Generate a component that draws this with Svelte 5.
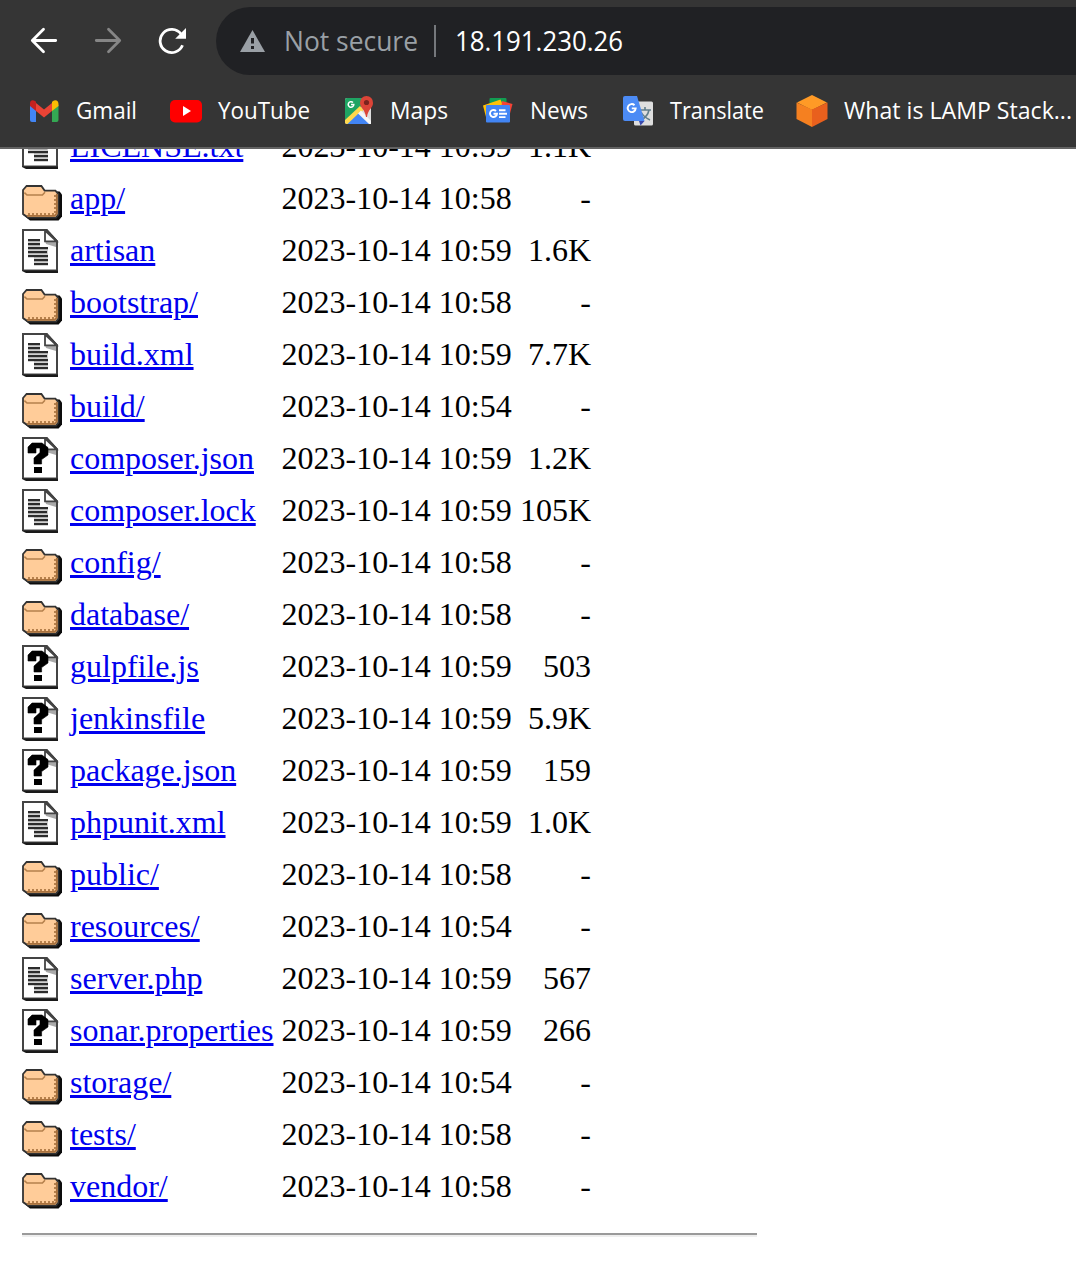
<script lang="ts">
  type Kind = 'text' | 'folder' | 'unknown';
  const rows: [Kind, string, string, string][] = [
    ['text', 'LICENSE.txt', '10:59', '1.1K'],
    ['folder', 'app/', '10:58', '-'],
    ['text', 'artisan', '10:59', '1.6K'],
    ['folder', 'bootstrap/', '10:58', '-'],
    ['text', 'build.xml', '10:59', '7.7K'],
    ['folder', 'build/', '10:54', '-'],
    ['unknown', 'composer.json', '10:59', '1.2K'],
    ['text', 'composer.lock', '10:59', '105K'],
    ['folder', 'config/', '10:58', '-'],
    ['folder', 'database/', '10:58', '-'],
    ['unknown', 'gulpfile.js', '10:59', '503'],
    ['unknown', 'jenkinsfile', '10:59', '5.9K'],
    ['unknown', 'package.json', '10:59', '159'],
    ['text', 'phpunit.xml', '10:59', '1.0K'],
    ['folder', 'public/', '10:58', '-'],
    ['folder', 'resources/', '10:54', '-'],
    ['text', 'server.php', '10:59', '567'],
    ['unknown', 'sonar.properties', '10:59', '266'],
    ['folder', 'storage/', '10:54', '-'],
    ['folder', 'tests/', '10:58', '-'],
    ['folder', 'vendor/', '10:58', '-']
  ];

  // label, full item width, label width
  const bookmarks: [string, number, number][] = [
    ['Gmail', 142, 61],
    ['YouTube', 172, 92],
    ['Maps', 140, 58],
    ['News', 140, 58],
    ['Translate', 174, 94],
    ['What is LAMP Stack...', 280, 228]
  ];
  const textLines = [[5, 3, 6], [7, 3, 6], [9, 3, 10], [11, 3, 9.5], [13, 3, 10], [15, 6, 7], [17, 6, 7]];
</script>

{#snippet label(text, width, size, color)}
  <svg class="label" width={width} height="40" fill={color}>
    <text x="0" y={20 + size * 0.35} font-size={size} textLength={width} lengthAdjust="spacingAndGlyphs">{text}</text>
  </svg>
{/snippet}

{#snippet bookmarkIcon(name)}
  <svg class="mark" viewBox="0 0 32 32">
    {#if name === 'Gmail'}
      <path d="M2 10v15a2 2 0 0 0 2 2h4V14z" fill="#4285f4" />
      <path d="M24 14v13h4.500a2 2 0 0 0 2-2V10z" fill="#34a853" />
      <path d="M8 8l8 6.500L24 8v8l-8 6.500L8 16z" fill="#ea4335" />
      <path d="M2 11V8.500C2 5 5 4.500 7 6l1 .8V16z" fill="#c5221f" />
      <path d="M24 16V7l1-1c3-2 5.500 0 5.500 3v2z" fill="#fbbc04" />
    {:else if name === 'YouTube'}
      <rect x="0" y="5" width="32" height="22.500" rx="5" fill="#f00" />
      <path d="M13 11l8 5-8 5z" fill="#fff" />
    {:else if name === 'Maps'}
      <rect x="3" y="3" width="26" height="26" rx="2" fill="#dcdcdc" />
      <path d="M5 3h18L19 13 3 27V5a2 2 0 0 1 2-2z" fill="#1fa463" />
      <path d="M3 25L18 11l3.500 4L8 29H5a2 2 0 0 1-2-2z" fill="#ffd84c" />
      <path d="M5.500 29L17 18l11 11z" fill="#4285f4" />
      <path d="M16 18.500l3-3L29 26v3h-2z" fill="#f5f5f5" />
      <path d="M24.500 1a6.500 6.500 0 0 0-6.500 7c0 5 5 6 6 14h1c1-8 6-9 6-14a6.500 6.500 0 0 0-6.500-7z" fill="#db4437" />
      <circle cx="24.500" cy="7.500" r="2.600" fill="#7b231e" />
      <path d="M11 7.500a2.800 2.800 0 1 0 .8 2H9" fill="none" stroke="#fff" stroke-width="1.500" />
    {:else if name === 'News'}
      <rect x="7.500" y="3" width="17" height="10" rx="1" fill="#119c52" />
      <path d="M1 10.500L18.500 4.500l5 12L4 22z" fill="#ffc107" />
      <path d="M20 6l10.500 3-4 15-8-2z" fill="#f44336" />
      <rect x="4" y="10" width="24" height="17.500" rx="1" fill="#4285f4" />
      <path d="M14 16a3.500 3.500 0 1 0 1 2.700h-3.500M17 15.300h6.500M17 18.700h8M17 22.100h6.500" fill="none" stroke="#fff" stroke-width="1.900" />
    {:else if name === 'Translate'}
      <rect x="12" y="6.500" width="19" height="24" rx="1.500" fill="#dedede" />
      <path d="M17 26h5.500l-4 4.500z" fill="#3a49ad" />
      <path d="M17 15h12M23 12v3M27 15c-1 5-4 8-8 10M19 17c2 4 5 6 9 8" fill="none" stroke="#607d8b" stroke-width="1.600" />
      <path d="M3 1h12l7.500 25H3a2 2 0 0 1-2-2V3a2 2 0 0 1 2-2z" fill="#4c8bf5" />
      <path d="M12.500 10.200a4 4 0 1 0 1.200 3.200H9.800" fill="none" stroke="#fff" stroke-width="1.900" />
    {:else}
      <path d="M16 0l15 7.500L16 15 1 7.500z" fill="#ff9a26" />
      <path d="M.5 7.500L16 14.500V32L.5 24z" fill="#f58020" />
      <path d="M31.500 7.500L16 14.500V32l15.500-8z" fill="#e9601d" />
    {/if}
  </svg>
{/snippet}

{#snippet fileIcon(kind)}
  <svg class="file" viewBox="0 0 20 22">
    {#if kind === 'folder'}
      <path d="M2 6.500L18.800 7.300l1.200 1.500v11l-1.700 2H4L.6 19z" fill="#0c0c0c" />
      <path d="M.5 6.500L2.300 4.500h7.400L11.300 6.800h5.400l1.500 1.800v10.200l-1.200 1.500H3L.5 18.500z" fill="#fc9" stroke="#333" stroke-width=".9" />
      <path d="M1.200 7.800l1.300 1.200h7.700L11.500 7.600" fill="none" stroke="#b5804c" stroke-width=".8" />
      <path d="M2.500 19.400h13.800l1.100-1.200V8.500" fill="none" stroke="#a9713d" stroke-width=".9" />
      <path d="M3 18.500h13M16.500 9v9" fill="none" stroke="#b5804c" stroke-width="1" stroke-dasharray="1 1" />
    {:else}
      <path d="M0 0h12.500L18 6v16H2l-2-1z" fill="#1a1a1a" />
      <path d="M0 0h12.500L18 6v14.800H0z" fill="#444" />
      <path d="M1 1h10.800L17 6.500v13.700H1z" fill="#fff" />
      <path d="M11.500 6H17v3l-5-1.500z" fill="#aaa" />
      <path d="M11.500 .8L17.300 6.200h-5.800z" fill="#fff" stroke="#444" stroke-width=".9" />
      {#if kind === 'text'}
        <path d="M3 5h6v4h4v9H6v-4H3z" fill="#d0d0d0" />
        {#each textLines as [y, x, w]}
          <rect {x} {y} width={w} height="1.100" fill="#2c2c2c" />
        {/each}
      {:else}
        <path d="M3 8V5l2-2h5l3 2.300V9l-3.200 2.300v2.200H6v-3l3-2.700V5.500H7V8z" fill="#000" stroke="#000" stroke-width=".3" />
        <rect x="6" y="15" width="4" height="3" fill="#000" />
      {/if}
    {/if}
  </svg>
{/snippet}

<div class="page">
  <header>
    <div class="toolbar">
      <svg class="nav" viewBox="0 0 28 28" stroke="#fff"><path d="M25.700 13.500H2.500M13.500 2.300L2.300 13.500l11.200 11.200" /></svg>
      <svg class="nav" viewBox="0 0 28 28" stroke="#868686"><path d="M2.300 13.500h23.200M14.500 2.300l11.200 11.200-11.200 11.200" /></svg>
      <svg class="nav" viewBox="0 0 28 28" stroke="#fff">
        <path d="M24.500 18.300A11.600 11.600 0 1 1 23 7" stroke-width="2.800" />
        <path d="M28 1v10.800H17.200z" fill="#fff" stroke="none" />
      </svg>
      <div class="omnibox">
        <svg class="warn" viewBox="0 0 25 22"><path d="M12.500 0L25 22H0z" fill="#9aa0a6" /><path d="M11 8h3v5.500h-3zM11 16h3v3h-3z" fill="#202124" /></svg>
        {@render label('Not secure', 134, 28, '#9aa0a6')}
        <span class="divider"></span>
        {@render label('18.191.230.26', 168, 28, '#fff')}
      </div>
    </div>
    <nav>
      {#each bookmarks as [name, width, labelWidth]}
        <div class="bookmark" style:width="{width}px">
          {@render bookmarkIcon(name)}
          {@render label(name, labelWidth, 24, '#fff')}
        </div>
      {/each}
    </nav>
  </header>
  <main>
    <div class="listing">
      {#each rows as [kind, name, time, size]}
        <div class="row">
          {@render fileIcon(kind)}
          <span class="name"><a href="#{name}">{name}</a></span>
          <span>2023-10-14 {time}</span>
          <span class="size">{size}</span>
        </div>
      {/each}
    </div>
    <div class="rule"></div>
  </main>
</div>

<style>
  :global(body) {
    background: #fff;
  }
  .page {
    display: flex;
    flex-direction: column;
    height: 1262px;
    overflow: hidden;
  }
  header {
    flex: none;
    box-sizing: border-box;
    height: 149px;
    padding-top: 7px;
    background: #353535;
    border-bottom: 2px solid #636363;
    overflow: hidden;
  }
  svg {
    display: block;
    flex: none;
  }
  .toolbar {
    display: flex;
    align-items: center;
    height: 68px;
    padding-left: 30px;
  }
  .nav {
    width: 28px;
    height: 28px;
    margin-right: 36px;
    fill: none;
    stroke-width: 2.8;
    stroke-linecap: round;
    stroke-linejoin: round;
  }
  .nav:nth-child(3) {
    margin-right: 30px;
    stroke-linecap: butt;
  }
  .omnibox {
    flex: 1;
    display: flex;
    align-items: center;
    height: 68px;
    padding-left: 24px;
    box-sizing: border-box;
    background: #202124;
    border-radius: 34px 0 0 34px;
  }
  .warn {
    width: 25px;
    height: 22px;
    margin-right: 19px;
  }
  .label {
    font-family: 'Open Sans', 'Noto Sans', sans-serif;
    overflow: visible;
  }
  .divider {
    width: 2px;
    height: 32px;
    margin: 0 19px 0 16px;
    background: #75787c;
  }
  nav {
    display: flex;
    align-items: center;
    height: 72px;
    padding-left: 28px;
  }
  .bookmark {
    flex: none;
    display: flex;
    align-items: center;
    gap: 16px;
  }
  .mark {
    width: 32px;
    height: 32px;
  }
  main {
    flex: 1;
    min-height: 0;
    overflow: hidden;
    padding-left: 22px;
    font: 32px 'Liberation Serif', 'Times New Roman', serif;
    color: #000;
  }
  .listing {
    margin-top: -28px;
  }
  .row {
    display: grid;
    grid-template-columns: 48px 211.5px 230px 79.5px;
    height: 52px;
    line-height: 50px;
    white-space: nowrap;
  }
  .file {
    width: 40px;
    height: 44px;
    margin-top: 4px;
  }
  a {
    color: #00e;
    text-decoration: underline;
    text-decoration-thickness: 3px;
    text-underline-offset: 2px;
  }
  .size {
    text-align: right;
  }
  .rule {
    width: 735px;
    height: 2px;
    margin-top: 20px;
    background: #9a9a9a;
    border-bottom: 2px solid #eee;
  }
</style>
